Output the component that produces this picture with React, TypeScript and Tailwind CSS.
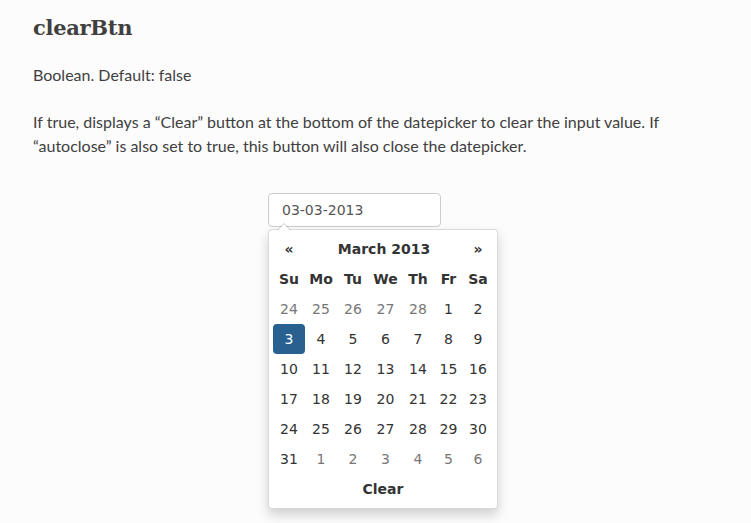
const weeks: { d: number; muted?: boolean; active?: boolean }[][] = [
  [{ d: 24, muted: true }, { d: 25, muted: true }, { d: 26, muted: true }, { d: 27, muted: true }, { d: 28, muted: true }, { d: 1 }, { d: 2 }],
  [{ d: 3, active: true }, { d: 4 }, { d: 5 }, { d: 6 }, { d: 7 }, { d: 8 }, { d: 9 }],
  [10, 11, 12, 13, 14, 15, 16].map((d) => ({ d })),
  [17, 18, 19, 20, 21, 22, 23].map((d) => ({ d })),
  [24, 25, 26, 27, 28, 29, 30].map((d) => ({ d })),
  [{ d: 31 }, { d: 1, muted: true }, { d: 2, muted: true }, { d: 3, muted: true }, { d: 4, muted: true }, { d: 5, muted: true }, { d: 6, muted: true }],
];

const dow = ["Su", "Mo", "Tu", "We", "Th", "Fr", "Sa"];

function Datepicker() {
  return (
    <div className="relative mt-[2px] w-[230px] rounded-[4px] border border-black/15 bg-white p-[4px] shadow-[0_6px_12px_rgba(0,0,0,0.175)]">
      <div className="absolute -top-[7px] left-[8px] h-0 w-0 border-x-[7px] border-b-[7px] border-x-transparent border-b-black/20" />
      <div className="absolute -top-[6px] left-[9px] h-0 w-0 border-x-[6px] border-b-[6px] border-x-transparent border-b-white" />
      <div className="grid grid-cols-[32px_32px_32px_33px_32px_29px_30px] text-center text-[14px] text-[#333] [font-family:'DejaVu_Sans',sans-serif]">
        <div className="flex h-[30px] items-center justify-center font-bold">«</div>
        <div className="col-span-5 flex h-[30px] items-center justify-center font-bold">March 2013</div>
        <div className="flex h-[30px] items-center justify-center font-bold">»</div>
        {dow.map((d) => (
          <div key={d} className="flex h-[30px] items-center justify-center font-bold">
            {d}
          </div>
        ))}
        {weeks.flat().map((c, i) => (
          <div
            key={i}
            className={
              c.active
                ? "flex h-[30px] items-center justify-center rounded-[4px] bg-[#286090] text-white"
                : c.muted
                  ? "flex h-[30px] items-center justify-center text-[#777]"
                  : "flex h-[30px] items-center justify-center"
            }
          >
            {c.d}
          </div>
        ))}
        <div className="col-span-7 flex h-[30px] items-center justify-center font-bold">Clear</div>
      </div>
    </div>
  );
}

export default function App() {
  return (
    <div className="min-h-[523px] w-[751px] bg-[#fcfcfc] px-[33px] pt-[12px] text-[#404040] [font-family:Lato,sans-serif]">
      <h2 className="text-[21px] font-bold leading-[32px] tracking-[-0.3px] text-[#404040] [font-family:'DejaVu_Serif',serif]">
        clearBtn
      </h2>
      <p className="mt-[19px] text-[16px] leading-[24px]">Boolean. Default: false</p>
      <p className="mt-[23px] text-[16px] leading-[24px]">
        If true, displays a “Clear” button at the bottom of the datepicker to clear the input value. If “autoclose” is
        also set to true, this button will also close the datepicker.
      </p>
      <div className="mt-[35px] ml-[235px]">
        <div className="flex h-[34px] w-[173px] items-center rounded-[4px] border border-[#ccc] bg-white px-[13px] text-[14px] text-[#555] [font-family:'DejaVu_Sans',sans-serif]">
          03-03-2013
        </div>
        <Datepicker />
      </div>
    </div>
  );
}
